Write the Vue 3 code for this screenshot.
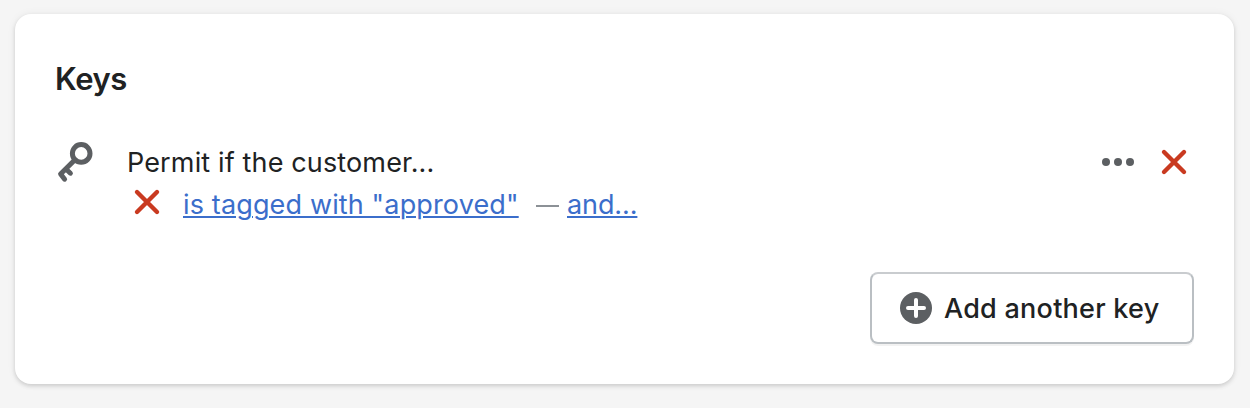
<script setup>
const conditions = [{ label: 'is tagged with "approved"' }]
</script>

<template>
  <main class="page">
    <section class="card">
      <h2 class="title">Keys</h2>

      <div class="rule">
        <svg class="key" viewBox="0 0 40 44" fill="none" stroke="#5c5f62" stroke-width="5" stroke-linecap="round" stroke-linejoin="round">
          <circle cx="25.2" cy="13.4" r="8.8" />
          <path d="M18.7 19.9 4.6 34 8.6 39.2M11 30 14.4 33.2" />
        </svg>
        <div class="body">
          <p class="line heading">Permit if the customer...</p>
          <div v-for="c in conditions" :key="c.label" class="line condition">
            <svg class="cross" viewBox="0 0 24 24"><path d="M2 2 22 22M22 2 2 22" /></svg>
            <a class="link tag">{{ c.label }}</a>
            <span class="dash"></span>
            <a class="link and">and...</a>
          </div>
        </div>
        <div class="actions">
          <svg class="dots" viewBox="0 0 32 8" fill="#5c5f62">
            <circle cx="4" cy="4" r="4" /><circle cx="16" cy="4" r="4" /><circle cx="28" cy="4" r="4" />
          </svg>
          <svg class="cross" viewBox="0 0 24 24"><path d="M2 2 22 22M22 2 2 22" /></svg>
        </div>
      </div>

      <div class="footer">
        <button class="add">
          <svg class="plus" viewBox="0 0 32 32">
            <circle cx="16" cy="16" r="16" fill="#5c5f62" />
            <path d="M16 8v16M8 16h16" fill="none" stroke="#fff" stroke-width="4" stroke-linecap="round" />
          </svg>
          <span class="add-label">Add another key</span>
        </button>
      </div>
    </section>
  </main>
</template>

<style>
body {
  background: #f5f5f5;
}
</style>

<style scoped>
.page {
  box-sizing: border-box;
  height: 408px;
  padding: 14px 16px 24px 15px;
  background: #f5f5f5;
  font-family: Inter, "Liberation Sans", sans-serif;
  color: #202223;
}
.card {
  box-sizing: border-box;
  height: 370px;
  padding: 45px 40px 40px;
  border-radius: 16px;
  background: #fff;
  box-shadow: 0 0 10px rgba(23, 24, 24, 0.05), 0 2px 4px rgba(0, 0, 0, 0.15);
}
.title {
  margin: 0;
  font-size: 31px;
  line-height: 40px;
  font-weight: 600;
  letter-spacing: -0.4px;
}
.rule {
  display: flex;
  margin-top: 41px;
}
.key {
  width: 40px;
  height: 44px;
  margin-left: 1px;
}
.body {
  margin-left: 31px;
  margin-top: 2px;
  flex: 1;
}
.line {
  margin: 0;
  height: 42px;
  font-size: 27px;
  line-height: 42px;
  letter-spacing: 0.14px;
  white-space: nowrap;
}
.condition {
  display: flex;
}
.cross {
  width: 24px;
  height: 24px;
  overflow: visible;
  fill: none;
  stroke: #c93a20;
  stroke-width: 4.4;
  stroke-linecap: round;
}
.condition .cross {
  margin: 6px 24px 0 8px;
}
.link {
  color: #3b6ecb;
  text-decoration: underline;
  text-decoration-thickness: 2px;
  text-underline-offset: 2px;
}
.tag {
  width: 336px;
}
.and {
  letter-spacing: -0.1px;
}
.dash {
  width: 23px;
  height: 2px;
  margin: 21px 8px 0 17px;
  background: #8c9196;
}
.actions {
  display: flex;
  align-items: center;
  height: 44px;
  margin-right: 8px;
}
.dots {
  width: 32px;
  height: 8px;
  margin-right: 28px;
}
.footer {
  display: flex;
  justify-content: flex-end;
  margin-top: 46px;
}
.add {
  box-sizing: border-box;
  display: flex;
  align-items: center;
  width: 324px;
  height: 72px;
  padding: 0 0 0 28px;
  border: 2px solid #babfc3;
  border-top-color: #c9cccf;
  border-radius: 8px;
  background: #fff;
  box-shadow: 0 2px 0 rgba(0, 0, 0, 0.05);
  color: #202223;
  font: 500 27px/40px Inter, "Liberation Sans", sans-serif;
  letter-spacing: 0.25px;
  white-space: nowrap;
}
.add-label {
  padding-top: 2px;
}
.plus {
  width: 32px;
  height: 32px;
  margin-right: 12px;
}
</style>
